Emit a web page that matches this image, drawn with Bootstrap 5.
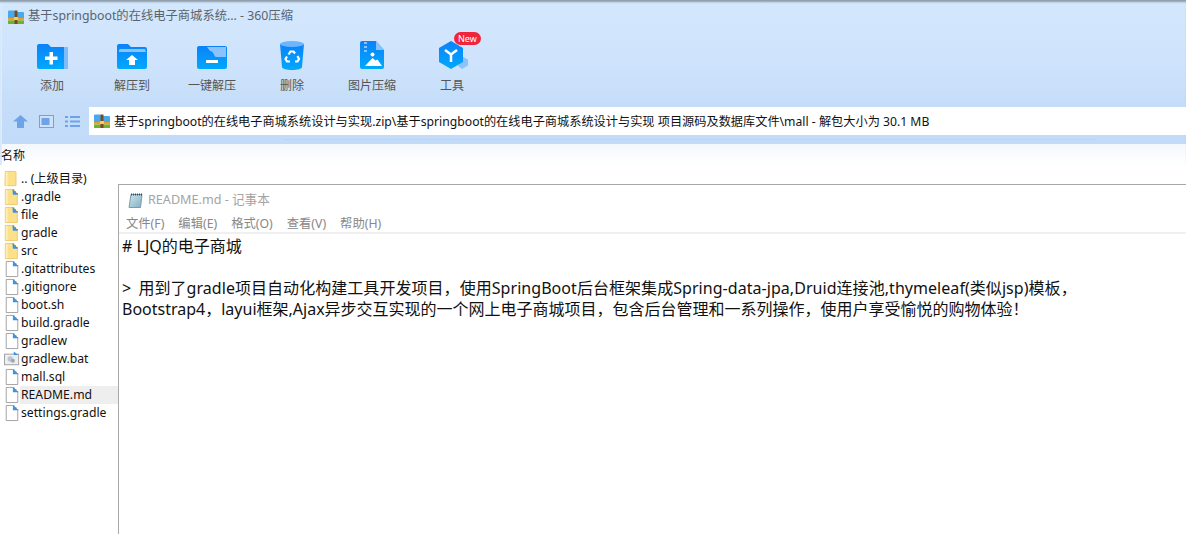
<!DOCTYPE html>
<html lang="zh">
<head>
<meta charset="utf-8">
<link href="https://cdn.jsdelivr.net/npm/bootstrap@5.3.0/dist/css/bootstrap.min.css" rel="stylesheet">
<style>
html,body{height:534px;overflow:hidden}
body{font-family:"Noto Sans","Noto Sans CJK SC",sans-serif;background:#fff;color:#111;position:relative}
.shell{width:1186px;height:534px}
.topband{height:165px;background:linear-gradient(#d3e7fd 0,#cfe4fc 60px,#c5ddf9 105px,#c1dbf8 143.500px,#f3f8fe 144px,#fff 165px);position:relative;box-shadow:inset 0 3px 2px -1px #8f9ba8,inset 2px 0 0 #dcecff}
.apptitle{height:30px;padding:3px 0 0 8px;font-size:12.300px;color:#5a646e;gap:4px;white-space:nowrap}
.tools{height:77px;padding-left:22px}
.tool{width:60px;margin-right:20px;font-size:12px;color:#555}
.tool svg{display:block;height:40px;width:44px}
.tool span{line-height:18px;white-space:nowrap;margin-top:7px}
.addr{height:28px}
.navicons{width:89px;padding-left:13px;gap:11px}
.pathbox{background:#fff;flex:1;height:28px;font-size:12.200px;color:#111;padding:0 0 0 5px;gap:4px;white-space:nowrap}
.pathbox span{padding-top:2px}
.splitline{height:1px;width:811px;margin:4px 0 0 284px;background:#b9d3f3}
.listhead{font-size:12px;padding-left:1px;line-height:16px;position:absolute;top:148px;left:0;color:#111}
.flist{padding:5px 0 0 4px;margin:0;list-style:none;font-size:12.200px}
.flist li{height:18px;line-height:18px;gap:0;width:114px;white-space:nowrap;color:#111}
.flist li span{flex:1;padding-left:1px}
.flist li.sel span{background:#eeeeee}
.pad{position:absolute;left:118px;top:184px;width:1070px;height:352px;background:#fff;border:1px solid #a8a8a8;border-right:0}
.padtitle{height:29px;font-size:12.600px;color:#a4a4a4;padding:2px 0 0 9px;gap:5px}
.padmenu{height:20px;font-size:12.300px;color:#888;padding:2px 0 0 7px;gap:14px;border-bottom:2px solid #f0f0f0}
.padtext{font-size:16px;line-height:21px;color:#111;padding:2px 0 0 3px;white-space:pre-wrap;font-family:"Noto Sans","Noto Sans CJK SC",sans-serif}
.padline{letter-spacing:.05px}
.quotemark{padding-right:3px}
.newtag{top:2px;left:32px;background:#f0243a;color:#fff;font-size:9px;line-height:13px;padding:0 4px;border-radius:7px;font-weight:400}
</style>
</head>
<body>
<svg width="0" height="0" class="position-absolute">
<defs>
<linearGradient id="bl" x1="0" y1="0" x2="0" y2="1"><stop offset="0" stop-color="#0b82f8"/><stop offset="1" stop-color="#00a8ff"/></linearGradient>
<linearGradient id="nt" x1="0" y1="0" x2="1" y2="1"><stop offset="0" stop-color="#cfe6ee"/><stop offset="1" stop-color="#7fb0c4"/></linearGradient>
<symbol id="ifold" viewBox="0 0 18 18"><path d="M1.500 .5h11a1 1 0 0 1 1 1v15h-12.500z" fill="#fde08a" stroke="#e9c66c"/><path d="M2 1v16h2V1z" fill="#fff0b8"/></symbol>
<symbol id="ifolds" viewBox="0 0 18 18"><path d="M1.500 .5h9l4.500 5v12H1.500z" fill="#fde08a" stroke="#e9c66c"/><path d="M2 1v16h2V1z" fill="#fff0b8"/><path d="M9.500 .5h2v2h2v2h2v2h-5.500z" fill="#3b94e2"/></symbol>
<symbol id="ifile" viewBox="0 0 18 18"><path d="M2.500 .5h8l5 5v12h-13z" fill="#fff" stroke="#9a9a9a"/><path d="M10 .5h2v2h2v2h2v1.500h-6z" fill="#3b94e2"/></symbol>
<symbol id="ibat" viewBox="0 0 18 18"><rect x=".5" y="3.500" width="16" height="12" fill="#eee" stroke="#9a9a9a"/><circle cx="7" cy="9" r="3" fill="#bcc6d0"/><circle cx="10" cy="11" r="2.200" fill="#98a8b8"/><path d="M11 .5l5 4h-5z" fill="#3b94e2"/></symbol>
<symbol id="izip" viewBox="0 0 16 16"><path d="M0 2.500a1 1 0 0 1 1-1h5l2 1.500h7a1 1 0 0 1 1 1V9H0z" fill="#46aaf0"/><path d="M0 9h16v2.500H0z" fill="#ea9f2e"/><path d="M0 11.500h16V15H0z" fill="#6fb232"/><rect x="6.500" y="1.500" width="3" height="13.500" fill="#7a4a20"/><rect x="6" y="8" width="4" height="3" fill="#f3d060"/></symbol>
</defs>
</svg>
<div class="shell">
<header class="topband">
<div class="apptitle d-flex align-items-center"><svg width="16" height="16"><use href="#izip"/></svg><span>基于springboot的在线电子商城系统... - 360压缩</span></div>
<nav class="tools d-flex align-items-start">
<div class="tool d-flex flex-column align-items-center"><svg viewBox="0 0 44 40"><path d="M7 16a2 2 0 0 1 2-2h9l3 3h15a2 2 0 0 1 2 2v18a2 2 0 0 1-2 2H9a2 2 0 0 1-2-2z" fill="url(#bl)"/><path d="M34 17h2.500a1.500 1.500 0 0 1 1.500 1.500v19a1.500 1.500 0 0 1-1.500 1.500H34z" fill="#7dbcfd"/><path d="M19.500 24h3.500v4.500h4.500v3.500H23v4.500h-3.500V32H15v-3.500h4.500z" fill="#fff" transform="translate(0 -2)"/></svg><span>添加</span></div>
<div class="tool d-flex flex-column align-items-center"><svg viewBox="0 0 44 40"><path d="M7 16a2 2 0 0 1 2-2h9l3 3h14a2 2 0 0 1 2 2v18a2 2 0 0 1-2 2H9a2 2 0 0 1-2-2z" fill="url(#bl)"/><path d="M9 20l1-1h25l1 3H9z" fill="#8ac2fd"/><path d="M22 25l6 5h-3v5h-6v-5h-3z" fill="#fff"/></svg><span>解压到</span></div>
<div class="tool d-flex flex-column align-items-center"><svg viewBox="0 0 44 40"><path d="M7 18a2 2 0 0 1 2-2h26a2 2 0 0 1 2 2v19a2 2 0 0 1-2 2H9a2 2 0 0 1-2-2z" fill="url(#bl)"/><path d="M17 17h19v10H26c-2 0-2-6-6-6z" fill="#8ac2fd"/><rect x="16" y="30" width="12" height="3" rx=".5" fill="#fff"/></svg><span>一键解压</span></div>
<div class="tool d-flex flex-column align-items-center"><svg viewBox="0 0 44 40"><path d="M10 14l2 23c0 4 20 4 20 0l2-23z" fill="url(#bl)"/><ellipse cx="22" cy="14" rx="12" ry="3" fill="#6db5fc"/><g fill="none" stroke="#fff" stroke-width="2.200"><path d="M18.500 24.500l2-3h3l1.500 2"/><path d="M27.500 26l1.500 3-1.500 2.500h-2.500"/><path d="M20 31.500h-3l-1.500-2.500 1.500-2.500"/></g></svg><span>删除</span></div>
<div class="tool d-flex flex-column align-items-center"><svg viewBox="0 0 44 40"><path d="M10 13a2 2 0 0 1 2-2h14l8 9v17a2 2 0 0 1-2 2H12a2 2 0 0 1-2-2z" fill="url(#bl)"/><path d="M26 11l8 9h-8z" fill="#8ac2fd"/><path d="M14 12h3v2h-3zm0 4h3v2h-3zm0 4h3v2h-3z" fill="#8ac2fd"/><path d="M15 36l7.500-8 3 2.500 2-1 4.500 6.500z" fill="#fff"/><circle cx="22.500" cy="24.500" r="2" fill="#fff"/></svg><span>图片压缩</span></div>
<div class="tool d-flex flex-column align-items-center position-relative"><svg viewBox="0 0 44 40"><path d="M33 27l5 2.500v6L32 39l-4-3z" fill="#8ac2fd"/><path d="M21 11l12 7v14l-12 7-12-7V18z" fill="url(#bl)"/><path d="M15 20l6 4.500 6-4.500M21 24.500v7.500" fill="none" stroke="#fff" stroke-width="2.500"/></svg><span>工具</span><b class="newtag position-absolute">New</b></div>
</nav>
<div class="addr d-flex align-items-center">
<div class="navicons d-flex align-items-center">
<svg width="15" height="13" viewBox="0 0 15 13"><path d="M7.500 0L15 6.500h-4V13H4V6.500H0z" fill="#6ea3ea"/></svg>
<svg width="15" height="13" viewBox="0 0 15 13"><rect x=".5" y=".5" width="14" height="12" fill="#cfe2fa" stroke="#6ea3ea"/><rect x="2.500" y="3" width="8" height="7" fill="#6ea3ea"/></svg>
<svg width="15" height="11" viewBox="0 0 15 11"><path d="M0 0h3v2H0zm5 0h10v2H5zM0 4.500h3v2H0zm5 0h10v2H5zM0 9h3v2H0zm5 0h10v2H5z" fill="#6ea3ea"/></svg>
</div>
<div class="pathbox d-flex align-items-center"><svg width="16" height="16"><use href="#izip"/></svg><span>基于springboot的在线电子商城系统设计与实现.zip\基于springboot的在线电子商城系统设计与实现 项目源码及数据库文件\mall - 解包大小为 30.1 MB</span></div>
</div>
<div class="splitline"></div>
<div class="listhead">名称</div>
</header>
<ul class="flist">
<li class="d-flex align-items-center"><svg width="16" height="18"><use href="#ifold"/></svg><span>.. (上级目录)</span></li>
<li class="d-flex align-items-center"><svg width="16" height="18"><use href="#ifolds"/></svg><span>.gradle</span></li>
<li class="d-flex align-items-center"><svg width="16" height="18"><use href="#ifolds"/></svg><span>file</span></li>
<li class="d-flex align-items-center"><svg width="16" height="18"><use href="#ifolds"/></svg><span>gradle</span></li>
<li class="d-flex align-items-center"><svg width="16" height="18"><use href="#ifolds"/></svg><span>src</span></li>
<li class="d-flex align-items-center"><svg width="16" height="18"><use href="#ifile"/></svg><span>.gitattributes</span></li>
<li class="d-flex align-items-center"><svg width="16" height="18"><use href="#ifile"/></svg><span>.gitignore</span></li>
<li class="d-flex align-items-center"><svg width="16" height="18"><use href="#ifile"/></svg><span>boot.sh</span></li>
<li class="d-flex align-items-center"><svg width="16" height="18"><use href="#ifile"/></svg><span>build.gradle</span></li>
<li class="d-flex align-items-center"><svg width="16" height="18"><use href="#ifile"/></svg><span>gradlew</span></li>
<li class="d-flex align-items-center"><svg width="16" height="18"><use href="#ibat"/></svg><span>gradlew.bat</span></li>
<li class="d-flex align-items-center"><svg width="16" height="18"><use href="#ifile"/></svg><span>mall.sql</span></li>
<li class="d-flex align-items-center sel"><svg width="16" height="18"><use href="#ifile"/></svg><span>README.md</span></li>
<li class="d-flex align-items-center"><svg width="16" height="18"><use href="#ifile"/></svg><span>settings.gradle</span></li>
</ul>
</div>
<section class="pad">
<div class="padtitle d-flex align-items-center"><svg width="15" height="15" viewBox="0 0 15 15"><path d="M3 1.500h11l-1.500 13H1z" fill="url(#nt)" stroke="#7e9aa8"/><path d="M3 1.500h11" stroke="#444" stroke-width="2" stroke-dasharray="1 1"/></svg><span>README.md - 记事本</span></div>
<div class="padmenu d-flex align-items-center"><span>文件(F)</span><span>编辑(E)</span><span>格式(O)</span><span>查看(V)</span><span>帮助(H)</span></div>
<div class="padtext"># LJQ的电子商城

<span class="padline"><span class="quotemark">&gt;</span> 用到了gradle项目自动化构建工具开发项目，使用SpringBoot后台框架集成Spring-data-jpa,Druid连接池,thymeleaf(类似jsp)模板，</span>
Bootstrap4，layui框架,Ajax异步交互实现的一个网上电子商城项目，包含后台管理和一系列操作，使用户享受愉悦的购物体验！</div>
</section>
</body>
</html>
